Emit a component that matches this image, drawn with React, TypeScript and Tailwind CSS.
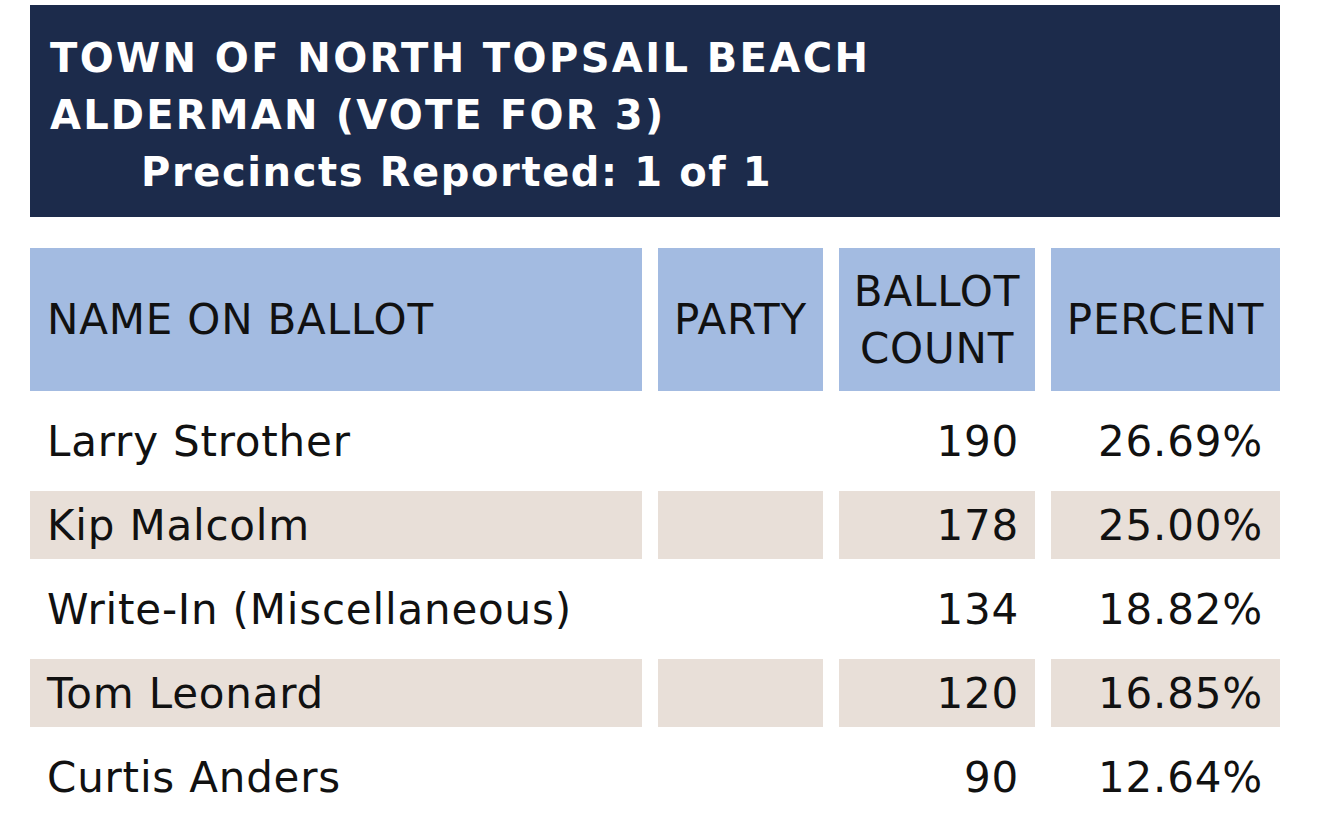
const rows = [
  { name: "Larry Strother", party: "", count: "190", pct: "26.69%" },
  { name: "Kip Malcolm", party: "", count: "178", pct: "25.00%" },
  { name: "Write-In (Miscellaneous)", party: "", count: "134", pct: "18.82%" },
  { name: "Tom Leonard", party: "", count: "120", pct: "16.85%" },
  { name: "Curtis Anders", party: "", count: "90", pct: "12.64%" },
]

const App = () => {
  return (
    <div className="w-[1320px] h-[826px] overflow-hidden bg-white pl-[30px] pt-[5px] font-['DejaVu_Sans',sans-serif] text-[#111]">
      <div className="w-[1250px] bg-[#1c2b4b] pl-5 pt-[25px] pb-4 text-white font-bold text-[40px] leading-[57px]">
        <div className="tracking-[2.4px]">TOWN OF NORTH TOPSAIL BEACH</div>
        <div className="tracking-[2.2px]">ALDERMAN (VOTE FOR 3)</div>
        <div className="pl-[91px] tracking-[1.6px]">Precincts Reported: 1 of 1</div>
      </div>

      <div className="mt-[31px] grid grid-cols-[612px_165px_196px_229px] gap-4 text-[42px] tracking-[0.8px]">
        <div className="h-[143px] bg-[#a3bbe1] flex items-center pl-[17px]">NAME ON BALLOT</div>
        <div className="h-[143px] bg-[#a3bbe1] flex items-center justify-center">PARTY</div>
        <div className="h-[143px] bg-[#a3bbe1] flex items-center justify-center text-center leading-[57px]">BALLOT<br />COUNT</div>
        <div className="h-[143px] bg-[#a3bbe1] flex items-center justify-center">PERCENT</div>

        {rows.map((r, i) => {
          const bg = i % 2 === 1 ? "bg-[#e8dfd8]" : "bg-white"
          return [
            <div key={r.name + "n"} className={`h-[68px] ${bg} flex items-center pl-[17px]`}>{r.name}</div>,
            <div key={r.name + "p"} className={`h-[68px] ${bg} flex items-center justify-center`}>{r.party}</div>,
            <div key={r.name + "c"} className={`h-[68px] ${bg} flex items-center justify-end pr-[16px]`}>{r.count}</div>,
            <div key={r.name + "x"} className={`h-[68px] ${bg} flex items-center justify-end pr-[17px]`}>{r.pct}</div>,
          ]
        })}
      </div>
    </div>
  )
}

export default App
